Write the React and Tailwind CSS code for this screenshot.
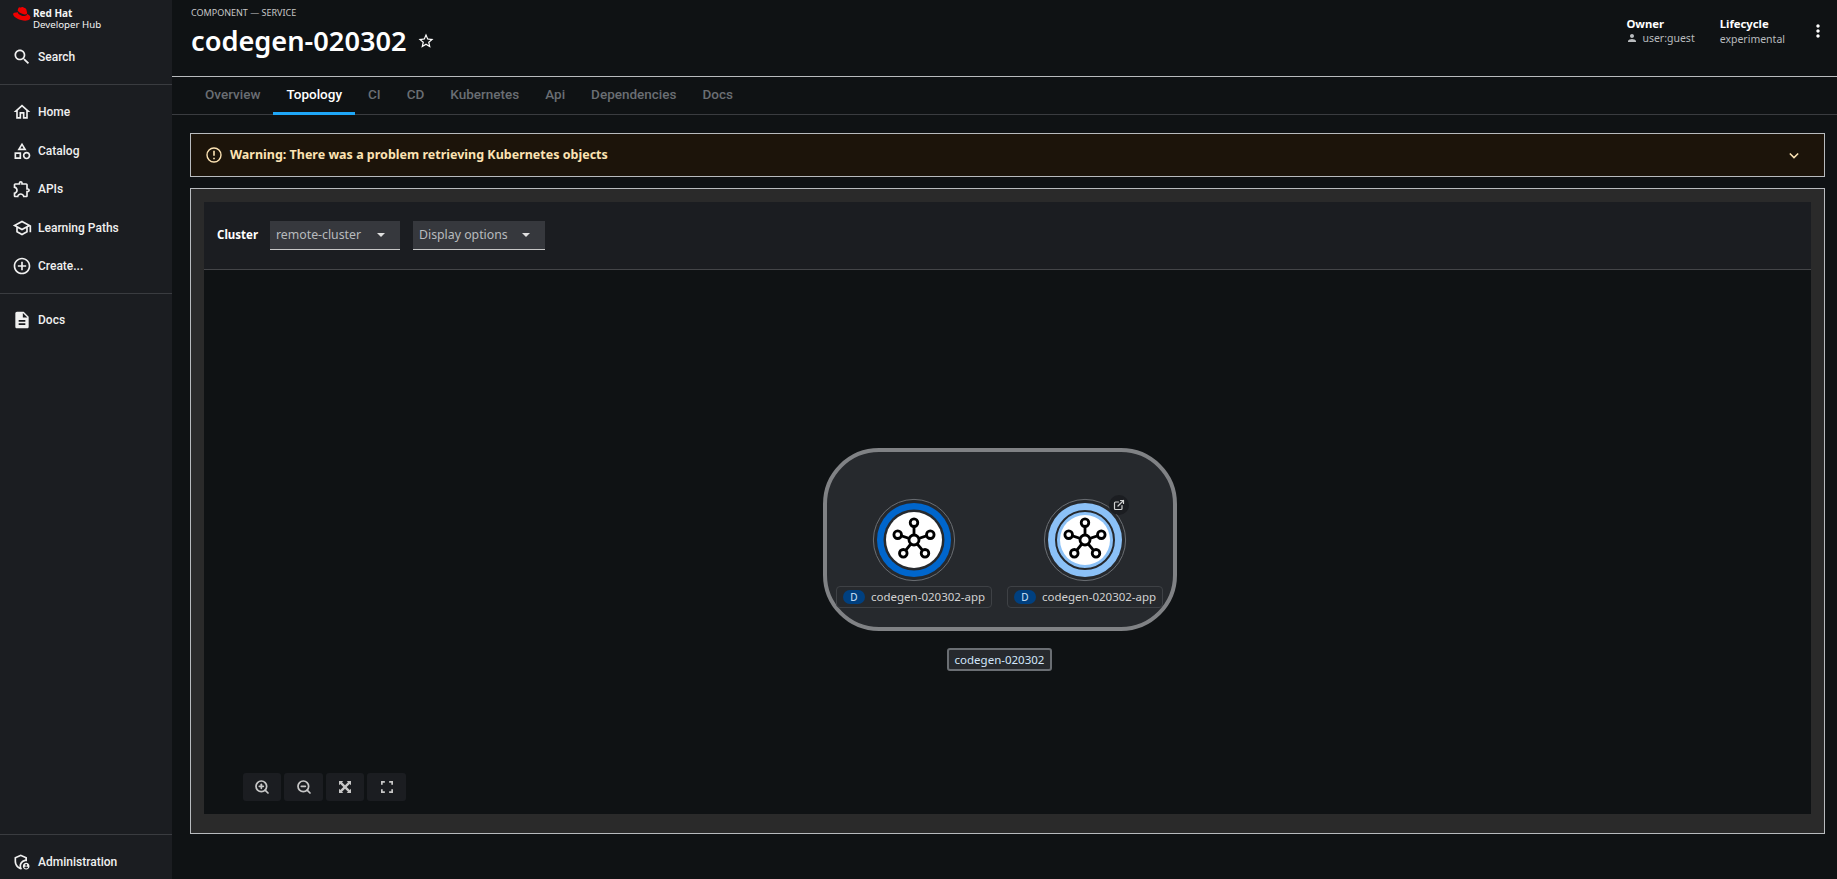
import React from 'react';
import { ZoomIn, ZoomOut, ExternalLink } from 'lucide-react';

const font = { fontFamily: '"Noto Sans", "Liberation Sans", sans-serif' };
const narrow = { fontFamily: 'Roboto, "Noto Sans", sans-serif' };

function MuiIcon({ d, className = 'w-5 h-5' }) {
  return (
    <svg viewBox="0 0 24 24" fill="currentColor" className={className}>
      <path d={d} />
    </svg>
  );
}

const icons = {
  search: 'M15.5 14h-.79l-.28-.27C15.41 12.59 16 11.11 16 9.5 16 5.91 13.09 3 9.5 3S3 5.91 3 9.5 5.91 16 9.5 16c1.61 0 3.09-.59 4.23-1.57l.27.28v.79l5 4.99L20.49 19l-4.99-5zm-6 0C7.01 14 5 11.99 5 9.5S7.01 5 9.5 5 14 7.01 14 9.5 11.99 14 9.5 14z',
  home: 'm12 5.69 5 4.5V18h-2v-6H9v6H7v-7.81l5-4.5M12 3 2 12h3v8h6v-6h2v6h6v-8h3L12 3z',
  catalog: 'M12 2l-5.5 9h11L12 2zm0 3.84L13.93 9h-3.87L12 5.84zM17.5 13c-2.49 0-4.5 2.01-4.5 4.5s2.01 4.5 4.5 4.5 4.5-2.01 4.5-4.5-2.01-4.5-4.5-4.5zm0 7c-1.38 0-2.5-1.12-2.5-2.5s1.12-2.5 2.5-2.5 2.5 1.12 2.5 2.5-1.12 2.5-2.5 2.5zM3 21.5h8v-8H3v8zm2-6h4v4H5v-4z',
  apis: 'M10.5 4.5c.28 0 .5.22.5.5v2h6v6h2c.28 0 .5.22.5.5s-.22.5-.5.5h-2v6h-2.12c-.68-1.75-2.39-3-4.38-3s-3.7 1.25-4.38 3H4v-2.12c1.75-.68 3-2.39 3-4.38 0-1.99-1.24-3.7-2.99-4.38L4 7h6V5c0-.28.22-.5.5-.5m0-2C9.12 2.5 8 3.62 8 5H4c-1.1 0-1.99.9-1.99 2v3.8h.29c1.49 0 2.7 1.21 2.7 2.7s-1.21 2.7-2.7 2.7H2V20c0 1.1.9 2 2 2h3.8v-.3c0-1.49 1.21-2.7 2.7-2.7s2.7 1.21 2.7 2.7v.3H17c1.1 0 2-.9 2-2v-4c1.38 0 2.5-1.12 2.5-2.5S20.38 11 19 11V7c0-1.1-.9-2-2-2h-4c0-1.38-1.12-2.5-2.5-2.5z',
  school: 'M12 3 1 9l4 2.18v6L12 21l7-3.82v-6l2-1.09V17h2V9L12 3zm6.82 6L12 12.72 5.18 9 12 5.28 18.82 9zM17 15.99l-5 2.73-5-2.73v-3.72L12 15l5-2.73v3.72z',
  create: 'M13 7h-2v4H7v2h4v4h2v-4h4v-2h-4V7zm-1-5C6.48 2 2 6.48 2 12s4.48 10 10 10 10-4.48 10-10S17.52 2 12 2zm0 18c-4.41 0-8-3.59-8-8s3.59-8 8-8 8 3.59 8 8-3.59 8-8 8z',
  docs: 'M14 2H6c-1.1 0-1.99.9-1.99 2L4 20c0 1.1.89 2 1.99 2H18c1.1 0 2-.9 2-2V8l-6-6zm2 16H8v-2h8v2zm0-4H8v-2h8v2zm-3-5V3.5L18.5 9H13z',
  admin: 'M17 11c.34 0 .67.04 1 .09V6.27L10.5 3 3 6.27v4.91c0 4.54 3.2 8.79 7.5 9.82.55-.13 1.08-.32 1.6-.55-.69-.98-1.1-2.17-1.1-3.45 0-3.31 2.69-6 6-6zM10.5 19c-3.2-1-5.5-4.3-5.5-7.8V7.6l5.5-2.4L16 7.6V9c-3.9.4-7 3.8-7 7.9 0 .8.1 1.5.3 2.1zM17 13c-2.21 0-4 1.79-4 4s1.79 4 4 4 4-1.79 4-4-1.79-4-4-4zm0 1.38c.62 0 1.12.51 1.12 1.12s-.51 1.12-1.12 1.12-1.12-.51-1.12-1.12.5-1.12 1.12-1.12zm0 5.37c-.93 0-1.74-.46-2.24-1.17.05-.72 1.51-1.08 2.24-1.08s2.19.36 2.24 1.08c-.5.71-1.31 1.17-2.24 1.17z',
  person: 'M12 12c2.21 0 4-1.79 4-4s-1.79-4-4-4-4 1.79-4 4 1.79 4 4 4zm0 2c-2.67 0-8 1.34-8 4v2h16v-2c0-2.66-5.33-4-8-4z',
  star: 'M22 9.24l-7.19-.62L12 2 9.19 8.63 2 9.24l5.46 4.73L5.82 21 12 17.27 18.18 21l-1.63-7.03L22 9.24zM12 15.4l-3.76 2.27 1-4.28-3.32-2.88 4.38-.38L12 6.1l1.71 4.04 4.38.38-3.32 2.88 1 4.28L12 15.4z',
  more: 'M12 8c1.1 0 2-.9 2-2s-.9-2-2-2-2 .9-2 2 .9 2 2 2zm0 2c-1.1 0-2 .9-2 2s.9 2 2 2 2-.9 2-2-.9-2-2-2zm0 6c-1.1 0-2 .9-2 2s.9 2 2 2 2-.9 2-2-.9-2-2-2z',
};

function NavItem({ icon, label, className = 'h-[38.5px]' }) {
  return (
    <div className={`flex items-center pl-[12px] text-[#f0f0f0] ${className}`} style={narrow}>
      <MuiIcon d={icons[icon]} className="w-[20px] h-[20px] mr-[6px] shrink-0" />
      <span className="text-[12px] font-medium">{label}</span>
    </div>
  );
}

function Sidebar() {
  return (
    <aside className="w-[172px] shrink-0 h-full bg-[#1b1d21] flex flex-col">
      <div className="h-[36px] relative">
        <svg viewBox="0 0 20 15" className="absolute left-[12px] top-[7px] w-[19px] h-[14px]">
          <path fill="#ee0000" d="M13 8c1.2 0 3-.3 3-1.700V6l-.8-3.200c-.2-.7-.3-1.100-1.600-1.700C12.600.6 11 0 10.500 0 10 0 9.900.6 9.300.6 8.800.6 8.300.2 7.800.2c-.5 0-.8.3-1.100 1 0 0-.7 2.100-.8 2.400v.2c0 .8 3 3.400 7.100 4.200zm2.700-.9c.1.700.1.800.1.800 0 1.100-1.200 1.700-2.800 1.700-3.600 0-6.800-2.100-6.800-3.500 0-.2 0-.4.100-.6C3.100 5.600 1 5.900 1 7.800 1 10.900 8.300 14.700 14 14.700c4.400 0 5.500-2 5.500-3.600 0-1.300-1.100-2.700-3.800-4z" />
        </svg>
        <div className="absolute left-[33px] top-[8px] text-[#f5f5f5] leading-[11px]">
          <div className="text-[10px] font-bold">Red Hat</div>
          <div className="text-[9.7px]">Developer Hub</div>
        </div>
      </div>
      <NavItem icon="search" label="Search" className="h-[42px]" />
      <div className="h-[7px] border-b border-[#3a3c40]" />
      <div className="h-[8px]" />
      <NavItem icon="home" label="Home" />
      <NavItem icon="catalog" label="Catalog" />
      <NavItem icon="apis" label="APIs" />
      <NavItem icon="school" label="Learning Paths" />
      <NavItem icon="create" label="Create..." />
      <div className="h-[8px] border-b border-[#3a3c40]" />
      <NavItem icon="docs" label="Docs" className="h-[53px]" />
      <div className="flex-1 border-b border-[#3a3c40]" />
      <NavItem icon="admin" label="Administration" className="h-[44px] pt-[9px]" />
    </aside>
  );
}

function MetaBlock({ title, children }) {
  return (
    <div>
      <div className="text-[11.3px] leading-[14px] font-bold text-white">{title}</div>
      {children}
    </div>
  );
}

function Header() {
  return (
    <header className="h-[77px] shrink-0 border-b border-[#b8bbbe] pl-[19px] pr-[9px] flex justify-between">
      <div>
        <div className="text-[9px] leading-[12px] mt-[7px] text-[#c7c7c7]">COMPONENT — SERVICE</div>
        <div className="flex items-center mt-[3px]">
          <h1 className="text-[27.2px] leading-[38px] font-semibold text-white">codegen-020302</h1>
          <MuiIcon d={icons.star} className="w-[18px] h-[18px] ml-[10px] text-white" />
        </div>
      </div>
      <div className="flex pt-[17px]">
        <MetaBlock title="Owner">
          <div className="flex items-center text-[10.5px] leading-[14px] text-[#b8bbbe]">
            <MuiIcon d={icons.person} className="w-[12px] h-[12px] mr-[4px]" />
            user:guest
          </div>
        </MetaBlock>
        <div className="w-[25px]" />
        <MetaBlock title="Lifecycle">
          <div className="text-[10.5px] leading-[16px] text-[#b8bbbe]">experimental</div>
        </MetaBlock>
        <MuiIcon d={icons.more} className="w-[20px] h-[20px] ml-[23px] mt-[4px] text-white" />
      </div>
    </header>
  );
}

const tabs = ['Overview', 'Topology', 'CI', 'CD', 'Kubernetes', 'Api', 'Dependencies', 'Docs'];

function Tabs() {
  return (
    <nav className="h-[38px] shrink-0 border-b border-[#3a3c40] pl-[20px] flex" style={narrow}>
      {tabs.map((tab) => (
        <div
          key={tab}
          className={`h-[38px] px-[13px] flex items-center text-[13.5px] font-medium ${
            tab === 'Topology' ? 'text-white border-b-[3px] border-[#1fa7f8]' : 'text-[#6a6e73] pb-[3px]'
          }`}
        >
          {tab}
        </div>
      ))}
    </nav>
  );
}

function HubNode({ variant }) {
  const spokes = [
    [0, -17.3],
    [-16.3, -5.3],
    [16.3, -5.3],
    [-10.7, 13.3],
    [11, 13.3],
  ];
  return (
    <svg viewBox="-42 -42 84 84" className="w-[84px] h-[84px]">
      <circle r="40.6" fill="none" stroke="#6a6e73" strokeWidth="1" />
      {variant === 'selected' ? (
        <>
          <circle r="37" fill="#8bc1f7" />
          <circle r="29" fill="#8bc1f7" stroke="#26292d" strokeWidth="2" />
          <circle r="25" fill="#ffffff" />
        </>
      ) : (
        <>
          <circle r="37" fill="#0066cc" />
          <circle r="30.5" fill="#26292d" />
          <circle r="28" fill="#ffffff" />
        </>
      )}
      <g stroke="#000000" strokeWidth="2.8">
        {spokes.map(([x, y]) => (
          <line key={`${x}-${y}`} x1="0" y1="0" x2={x} y2={y} />
        ))}
        {spokes.map(([x, y]) => (
          <circle key={`c${x}-${y}`} cx={x} cy={y} r="3.8" fill="#ffffff" />
        ))}
        <circle r="5" fill="#ffffff" />
      </g>
    </svg>
  );
}

function NodeLabel({ className }) {
  return (
    <div className={`absolute top-[134px] w-[156px] h-[22px] rounded-[4px] border border-[#3e4145] bg-[#26292d] flex items-center pl-[6px] ${className}`}>
      <span className="w-[22px] h-[14px] rounded-full bg-[#004080] text-[#d2e6fb] text-[10px] flex items-center justify-center">D</span>
      <span className="ml-[6px] text-[11.5px] text-[#d2d2d2]">codegen-020302-app</span>
    </div>
  );
}

function Topology() {
  return (
    <div className="relative flex-1 bg-[#0f1214]">
      {/* group sits at a free position on the canvas */}
      <div className="absolute left-[619px] top-[178px] w-[354px] h-[183px] rounded-[56px] border-4 border-[#808285] bg-[#26292d]">
        <div className="absolute left-[45px] top-[46px]"><HubNode variant="plain" /></div>
        <div className="absolute left-[216px] top-[46px]"><HubNode variant="selected" /></div>
        <div className="absolute left-[282px] top-[43px] w-[20px] h-[20px] rounded-full bg-[#1b1d21] text-[#d2d2d2] flex items-center justify-center">
          <ExternalLink size={12} strokeWidth={2.4} />
        </div>
        <NodeLabel className="left-[9px]" />
        <NodeLabel className="left-[180px]" />
      </div>
      <div className="absolute left-[743px] top-[378px] w-[105px] h-[23px] rounded-[3px] border-2 border-[#6a6e73] bg-[#26292d] flex items-center justify-center text-[11.5px] text-[#d2e6fb]">
        codegen-020302
      </div>
      <div className="absolute left-[39px] bottom-[13px] flex gap-[3px] text-[#c7c7c7]">
        <div className="w-[38px] h-[28px] rounded-[3px] bg-[#1b1d21] flex items-center justify-center"><ZoomIn size={16} strokeWidth={2.6} /></div>
        <div className="w-[39px] h-[28px] rounded-[3px] bg-[#1b1d21] flex items-center justify-center"><ZoomOut size={16} strokeWidth={2.6} /></div>
        <div className="w-[38px] h-[28px] rounded-[3px] bg-[#1b1d21] flex items-center justify-center">
          <svg viewBox="0 0 14 14" className="w-[12px] h-[12px]" fill="currentColor">
            <path d="M0 0h5L3.500 1.500 7 5l3.500-3.500L9 0h5v5l-1.500-1.500L9 7l3.500 3.500L14 9v5H9l1.500-1.500L7 9l-3.500 3.500L5 14H0V9l1.500 1.500L5 7 1.500 3.500 0 5z" />
          </svg>
        </div>
        <div className="w-[39px] h-[28px] rounded-[3px] bg-[#1b1d21] flex items-center justify-center">
          <svg viewBox="0 0 14 14" className="w-[12px] h-[12px]" fill="none" stroke="currentColor" strokeWidth="2">
            <path d="M1 4.500V1h3.500M9.500 1H13v3.500M13 9.500V13H9.500M4.500 13H1V9.500" />
          </svg>
        </div>
      </div>
    </div>
  );
}

function Dropdown({ label, className }) {
  return (
    <div className={`h-[29px] bg-[#36383d] border-b border-[#c7c7c7] flex items-center justify-between pl-[6px] pr-[15px] text-[12.3px] text-[#b8bbbe] ${className}`}>
      <span className="pt-[1px]">{label}</span>
      <span className="w-0 h-0 border-x-[4px] border-x-transparent border-t-[4px] border-t-[#e0e0e0]" />
    </div>
  );
}

export default function App() {
  return (
    <div className="w-[1837px] h-[879px] flex overflow-hidden bg-[#0f1214]" style={font}>
      <Sidebar />
      <main className="flex-1 flex flex-col min-w-0">
        <Header />
        <Tabs />
        <div className="flex-1 flex flex-col pt-[18px] pl-[18px] pr-[12px] pb-[45px]">
          <div className="h-[44px] shrink-0 border border-[#b8bbbe] bg-[#1c140a] flex items-center justify-between pl-[15px] pr-[25px] text-[#fce3b3]">
            <div className="flex items-center">
              <svg viewBox="0 0 16 16" className="w-[16px] h-[16px] mr-[8px]" fill="none" stroke="currentColor" strokeWidth="1.400">
                <circle cx="8" cy="8" r="7" />
                <path d="M8 3.800v5M8 10.800v1.500" strokeWidth="1.600" />
              </svg>
              <span className="text-[12.5px] font-bold">Warning: There was a problem retrieving Kubernetes objects</span>
            </div>
            <svg viewBox="0 0 12 8" className="w-[10px] h-[7px]" fill="none" stroke="currentColor" strokeWidth="1.800">
              <path d="M1 1.500l5 5 5-5" />
            </svg>
          </div>
          <div className="h-[11px] shrink-0" />
          <div className="flex-1 min-h-0 border border-[#b8bbbe] bg-[#2a2a2a] p-[13px] pb-[19px] flex">
            <div className="flex-1 flex flex-col">
              <div className="h-[68px] shrink-0 bg-[#1b1d21] border-b border-[#444548] flex items-center pl-[13px]">
                <span className="w-[53px] mb-[2px] text-[11.5px] font-bold text-white">Cluster</span>
                <Dropdown label="remote-cluster" className="w-[130px]" />
                <Dropdown label="Display options" className="w-[132px] ml-[13px]" />
              </div>
              <Topology />
            </div>
          </div>
        </div>
      </main>
    </div>
  );
}
